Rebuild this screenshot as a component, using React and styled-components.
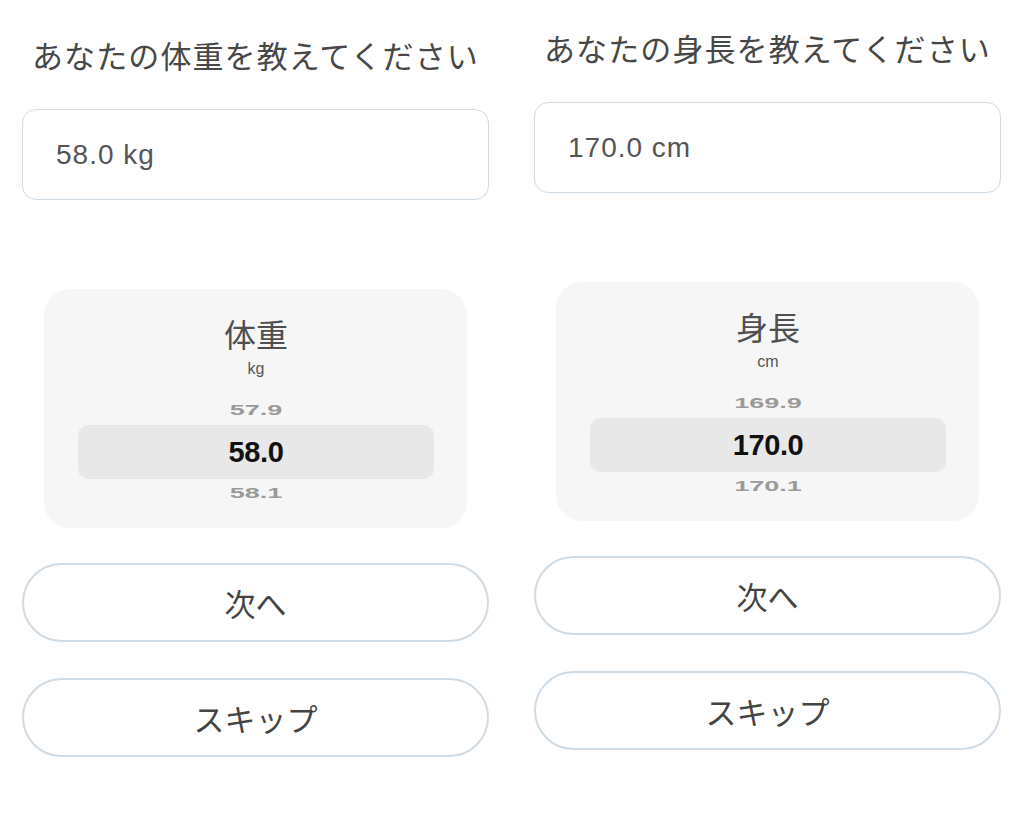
import React from "react"
import styled, { createGlobalStyle } from "styled-components"

const GlobalStyle = createGlobalStyle`
  html, body {
    margin: 0;
    padding: 0;
    background: #ffffff;
  }
  body {
    font-family: "Noto Sans CJK JP", "Noto Sans", sans-serif;
    color: #4a4a4a;
  }
`

const Page = styled.div`
  display: grid;
  grid-template-columns: 512px 512px;
  width: 1024px;
  height: 820px;
  overflow: hidden;
`

const Column = styled.div`
  display: flex;
  flex-direction: column;
  padding: ${(p) => p.$top}px 23px 0 22px;
`

const Title = styled.h1`
  margin: 0 0 0 10px;
  height: 37px;
  line-height: 37px;
  font-size: 31px;
  font-weight: 400;
  letter-spacing: 1.1px;
  color: #474747;
  white-space: nowrap;
`

const ValueField = styled.div`
  box-sizing: border-box;
  margin-top: 36px;
  height: 91px;
  display: flex;
  align-items: center;
  padding-left: 33px;
  border: 1.5px solid #cfdbe5;
  border-radius: 14px;
  font-family: "Liberation Sans", "Noto Sans CJK JP", sans-serif;
  font-size: 28px;
  letter-spacing: 1px;
  color: #555555;
`

const PickerCard = styled.div`
  box-sizing: border-box;
  margin: 89px 0 0 22px;
  width: 423px;
  height: 239px;
  padding: 24px 33px 0 34px;
  background: #f6f6f6;
  border-radius: 26px;
  display: flex;
  flex-direction: column;
  align-items: center;
`

const PickerLabel = styled.div`
  height: 40px;
  line-height: 40px;
  font-size: 32px;
  font-weight: 400;
  color: #4f4f4f;
`

const PickerUnit = styled.div`
  margin-top: 6px;
  height: 20px;
  line-height: 20px;
  font-family: "Liberation Sans", sans-serif;
  font-size: 16px;
  color: #555555;
`

const Wheel = styled.div`
  margin-top: 16px;
  width: 100%;
  display: flex;
  flex-direction: column;
`

const SideRow = styled.div`
  height: ${(p) => p.$h}px;
  display: flex;
  align-items: center;
  justify-content: center;
  font-family: "Liberation Sans", sans-serif;
  font-weight: 700;
  font-size: 27px;
  color: #9a9a9a;

  span {
    display: inline-block;
    transform: scaleY(0.55);
  }
`

const SelectedRow = styled.div`
  height: 54px;
  border-radius: 10px;
  background: #e8e8e8;
  display: flex;
  align-items: center;
  justify-content: center;
  font-family: "Liberation Sans", sans-serif;
  font-weight: 700;
  font-size: 29px;
  letter-spacing: -0.4px;
  color: #111111;
`

const PillButton = styled.button`
  box-sizing: border-box;
  margin-top: ${(p) => p.$gap}px;
  height: 79px;
  width: 100%;
  border: 2px solid #cfdbe5;
  border-radius: 40px;
  background: #ffffff;
  font-family: "Noto Sans CJK JP", sans-serif;
  font-size: 31px;
  font-weight: 400;
  color: #444444;
  padding: 0;
  cursor: pointer;
`

const questions = [
  {
    top: 36,
    title: "あなたの体重を教えてください",
    value: "58.0 kg",
    label: "体重",
    unit: "kg",
    prev: "57.9",
    current: "58.0",
    next: "58.1",
  },
  {
    top: 29,
    title: "あなたの身長を教えてください",
    value: "170.0 cm",
    label: "身長",
    unit: "cm",
    prev: "169.9",
    current: "170.0",
    next: "170.1",
  },
]

const QuestionColumn = ({ q }) => (
  <Column $top={q.top}>
    <Title>{q.title}</Title>
    <ValueField>{q.value}</ValueField>
    <PickerCard>
      <PickerLabel>{q.label}</PickerLabel>
      <PickerUnit>{q.unit}</PickerUnit>
      <Wheel>
        <SideRow $h={30}>
          <span>{q.prev}</span>
        </SideRow>
        <SelectedRow>{q.current}</SelectedRow>
        <SideRow $h={28}>
          <span>{q.next}</span>
        </SideRow>
      </Wheel>
    </PickerCard>
    <PillButton $gap={35}>次へ</PillButton>
    <PillButton $gap={36}>スキップ</PillButton>
  </Column>
)

export default function App() {
  return (
    <>
      <GlobalStyle />
      <Page>
        {questions.map((q) => (
          <QuestionColumn key={q.label} q={q} />
        ))}
      </Page>
    </>
  )
}
